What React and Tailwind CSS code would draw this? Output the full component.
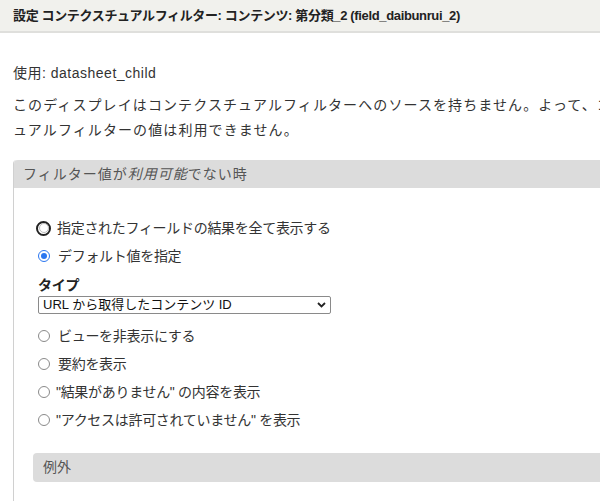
// Contextual filter settings dialog (Drupal Views, Japanese UI)

const font = { fontFamily: '"Liberation Sans", "Noto Sans CJK JP", sans-serif' }

function Radio({ state }) {
  if (state === 'focus') {
    return (
      <span className="w-[15px] h-[15px] rounded-full border-2 border-[#222] bg-white flex items-center justify-center shrink-0">
        <span className="w-[10px] h-[10px] rounded-full border border-[#bbb]" />
      </span>
    )
  }
  if (state === 'checked') {
    return (
      <span className="w-[12px] h-[12px] rounded-full border-[1.5px] border-[#2a76f0] bg-white flex items-center justify-center shrink-0">
        <span className="w-[6px] h-[6px] rounded-full bg-[#2a76f0]" />
      </span>
    )
  }
  return <span className="w-[12px] h-[12px] rounded-full border border-[#8a8a8a] bg-white shrink-0" />
}

function Option({ state, label, gap = 'gap-[8px]' }) {
  return (
    <label className={`flex items-center ${gap} h-[28px]`}>
      <Radio state={state} />
      <span>{label}</span>
    </label>
  )
}

export default function App() {
  return (
    <div className="w-[600px] h-[501px] overflow-hidden bg-white text-[14px] text-[#333]" style={font}>
      <div className="w-[720px]">
        {/* Title bar */}
        <div className="h-[33px] bg-[#f1f1ed] border-b-2 border-[#dfdfdc] px-[13px] flex items-center font-bold text-[13px] tracking-[-0.35px] text-[#222]">
          設定 コンテクスチュアルフィルター: コンテンツ: 第分類_2 (field_daibunrui_2)
        </div>

        <div className="px-[13px]">
          <p className="mt-[30px] leading-[20px] tracking-[0.5px]">使用: datasheet_child</p>
          <p className="mt-[10px] leading-[25px] tracking-[1.1px] whitespace-nowrap">
            このディスプレイはコンテクスチュアルフィルターへのソースを持ちません。よって、コンテクスチ
            <br />
            ュアルフィルターの値は利用できません。
          </p>

          {/* Fieldset */}
          <div className="mt-[17px] border-l border-[#d0d0d0] rounded-tl-[4px]">
            <div className="h-[28px] bg-[#dcdcdc] rounded-t-[4px] pl-[9px] flex items-center text-[#555] tracking-[1px]">
              フィルター値が<em className="italic">利用可能</em>でない時
            </div>

            <div className="pl-[22px] pt-[26px] tracking-[-0.3px]">
              <Option state="focus" label="指定されたフィールドの結果を全て表示する" gap="gap-[6px]" />
              <div className="pl-[2px]">
                <Option state="checked" label="デフォルト値を指定" />
              </div>
              <div className="pl-[2px]">
                <div className="font-bold text-[#222] leading-[20px] mt-[5px]">タイプ</div>
                <div className="mt-[1px] w-[293px] h-[18px] border border-[#8a8a8a] rounded-[2px] flex items-center justify-between px-[4px] text-[13px] text-[#111] tracking-normal">
                  <span>URL から取得したコンテンツ ID</span>
                  <svg width="9" height="6" viewBox="0 0 9 6" fill="none">
                    <path d="M1 1l3.5 3.5L8 1" stroke="#222" strokeWidth="1.8" />
                  </svg>
                </div>
                <div className="mt-[8px]">
                  <Option label="ビューを非表示にする" />
                  <Option label="要約を表示" />
                  <Option label={'"結果がありません" の内容を表示'} gap="gap-[6px]" />
                  <Option label={'"アクセスは許可されていません" を表示'} gap="gap-[6px]" />
                </div>
              </div>
            </div>

            <div className="pl-[19px] pt-[19px] pb-[30px]">
              <div className="h-[29px] bg-[#dcdcdc] rounded-[4px] pl-[10px] flex items-center text-[#555]">
                例外
              </div>
            </div>
          </div>
        </div>
      </div>
    </div>
  )
}
